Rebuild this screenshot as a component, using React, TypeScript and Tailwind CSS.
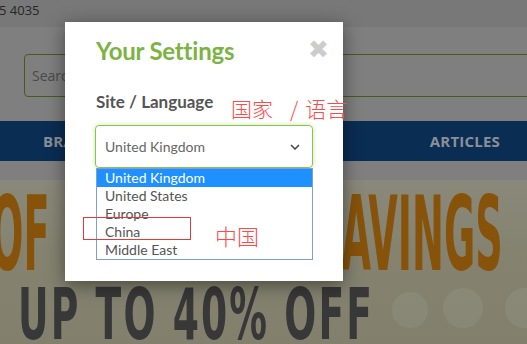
import React from 'react';

const countries = ['United Kingdom', 'United States', 'Europe', 'China', 'Middle East'];

const SettingsModal: React.FC = () => {
    return (
        <div className="absolute left-[65px] top-[22px] w-[278px] h-[259px] bg-white shadow-[0_4px_18px_rgba(0,0,0,0.45)] pl-[31px] pr-[30px] pt-[13px] font-['Lato',sans-serif]">
            {/* Header */}
            <div className="flex items-start justify-between">
                <h2 className="text-[24px] font-bold text-[#7cb342] leading-[32px] tracking-[-0.2px]">Your Settings</h2>
                <span className="mt-[3px] mr-[-16px] text-[25px] leading-[24px] text-[#cccccc] font-['DejaVu_Sans',sans-serif]">✖</span>
            </div>

            <p className="mt-[24px] text-[17px] font-bold text-[#555555] leading-[22px]">Site / Language</p>

            {/* Select + open list */}
            <div className="mt-[12px] w-[218px] ml-[-1px]">
                <div className="h-[43px] rounded-[4px] border border-[#8bc34a] shadow-[0_0_5px_rgba(139,195,74,0.45)] flex items-center justify-between pl-[9px] pr-[12px]">
                    <span className="text-[14px] text-[#666666]">United Kingdom</span>
                    <svg width="10" height="6" viewBox="0 0 10 6" fill="none">
                        <path d="M1 1L5 5L9 1" stroke="#444" strokeWidth="1.5" />
                    </svg>
                </div>
                <ul className="border border-[#7f9ed8] ml-[1px]">
                    {countries.map((c, i) => (
                        <li
                            key={c}
                            className={`h-[18px] leading-[18px] pl-[8px] text-[14px] ${i === 0 ? 'bg-[#1e90ff] text-white' : 'text-[#555555]'}`}
                        >
                            {c}
                        </li>
                    ))}
                </ul>
            </div>
        </div>
    );
};

export default function App() {
    return (
        <div className="relative w-[527px] h-[344px] overflow-hidden bg-[#7f7f7f] font-['Open_Sans',sans-serif]">
            {/* Top strip */}
            <div className="h-[27px] bg-[#787878] text-[13px] text-[#262626] leading-[20px] -ml-[1px]">5 4035</div>

            {/* Search */}
            <div className="pt-[27px] pl-[24px]">
                <div className="h-[43px] w-[540px] rounded-[4px] border border-[#4a5a1c] flex items-center pl-[7px] text-[14px] text-[#4a4a4a]">
                    Search
                </div>
            </div>

            {/* Nav */}
            <div className="mt-[24px] h-[40px] bg-[#0a2d54] flex items-center text-[15px] font-bold text-[#8b9098] tracking-[0.2px]">
                <span className="ml-[43px]">BRANDS</span>
                <span className="ml-auto mr-[27px]">ARTICLES</span>
            </div>

            {/* Banner */}
            <div className="relative mt-[19px] h-[170px] bg-[linear-gradient(180deg,#8a887a_0%,#858370_40%,#82806d_100%)] overflow-hidden font-['DejaVu_Sans',sans-serif]">
                {/* faint dots */}
                <div className="absolute left-[392px] top-[112px] w-[36px] h-[36px] rounded-full bg-white/[0.05]" />
                <div className="absolute left-[443px] top-[108px] w-[40px] h-[40px] rounded-full bg-white/[0.05]" />
                <div className="absolute left-[505px] top-[108px] w-[40px] h-[40px] rounded-full bg-white/[0.05]" />

                <div className="relative mt-[3px] flex h-[103px] text-[#87530a] font-bold text-[103px] leading-[103px] whitespace-nowrap">
                    <div className="w-[60px] shrink-0 ml-[-9px]">
                        <span className="inline-block scale-x-[0.37] origin-left">OF</span>
                    </div>
                    <div className="w-[184px] shrink-0 ml-auto mr-[29px]">
                        <span className="inline-block scale-x-[0.37] origin-left">SAVINGS</span>
                    </div>
                </div>
                <div className="relative mt-[-7px] ml-[18px] text-[#383838] font-bold text-[71px] leading-[71px] scale-x-[0.53] origin-left whitespace-nowrap tracking-[4px]">
                    UP TO 40% OFF
                </div>
            </div>

            <SettingsModal />

            {/* Red annotations */}
            <div className="absolute left-[83px] top-[217px] w-[108px] h-[23px] border border-[#e53935]" />
            <div className="absolute left-[231px] top-[94px] flex text-[21px] leading-[28px] text-[#ff4a4a] font-light whitespace-nowrap font-['Noto_Sans_CJK_SC',sans-serif]">
                <span>国家</span>
                <span className="ml-[17px] mr-[7px]">/</span>
                <span>语言</span>
            </div>
            <span className="absolute left-[215px] top-[221px] text-[22px] leading-[28px] text-[#ff4a4a] font-light font-['Noto_Sans_CJK_SC',sans-serif]">
                中国
            </span>
        </div>
    );
}
